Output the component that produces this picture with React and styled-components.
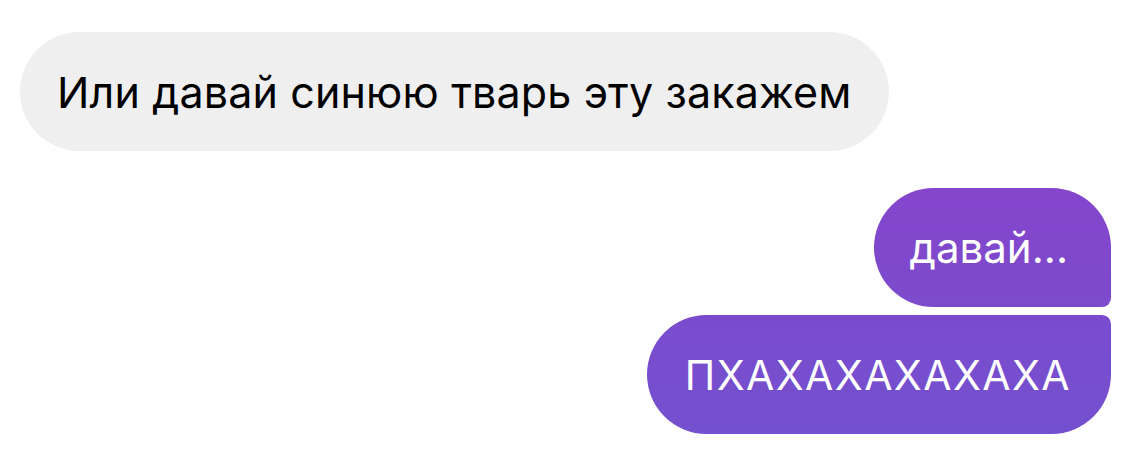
import React from "react";
import styled, { createGlobalStyle } from "styled-components";

const GlobalStyle = createGlobalStyle`
  body {
    margin: 0;
    background: #ffffff;
    font-family: "Inter", "Noto Sans", sans-serif;
    -webkit-font-smoothing: antialiased;
  }
`;

const Chat = styled.div`
  width: 1134px;
  height: 470px;
  box-sizing: border-box;
  padding: 32px 23px 0 20px;
  display: flex;
  flex-direction: column;
`;

const Group = styled.div`
  display: flex;
  flex-direction: column;
  align-items: ${(p) => (p.out ? "flex-end" : "flex-start")};
  gap: 8px;
  margin-top: ${(p) => p.offset || 0}px;
`;

const Bubble = styled.div`
  height: 119px;
  box-sizing: border-box;
  padding: 0 ${(p) => p.padRight || 37}px 0 ${(p) => p.padLeft || 37}px;
  display: inline-flex;
  align-items: center;
  font-size: ${(p) => p.size || 42}px;
  letter-spacing: ${(p) => p.spacing || 0}px;
  white-space: nowrap;
  border-radius: ${(p) => p.radius || "60px"};
  color: ${(p) => (p.out ? "#ffffff" : "#000000")};
  background: ${(p) => p.bg || "#efefef"};
`;

export default function App() {
  return (
    <>
      <GlobalStyle />
      <Chat>
        <Group>
          <Bubble size={43} spacing={0.15} padRight={38}>
            Или давай синюю тварь эту закажем
          </Bubble>
        </Group>
        <Group out offset={37}>
          <Bubble
            out
            radius="60px 60px 9px 60px"
            bg="linear-gradient(180deg, #8545cc 0%, #7c4bcc 100%)"
            padLeft={36}
            padRight={43}
          >
            давай...
          </Bubble>
          <Bubble
            out
            size={41}
            spacing={1.4}
            radius="60px 9px 60px 60px"
            bg="linear-gradient(180deg, #7a4ccd 0%, #7350cf 100%)"
            padLeft={38}
            padRight={40}
          >
            ПХАХАХАХАХАХА
          </Bubble>
        </Group>
      </Chat>
    </>
  );
}
